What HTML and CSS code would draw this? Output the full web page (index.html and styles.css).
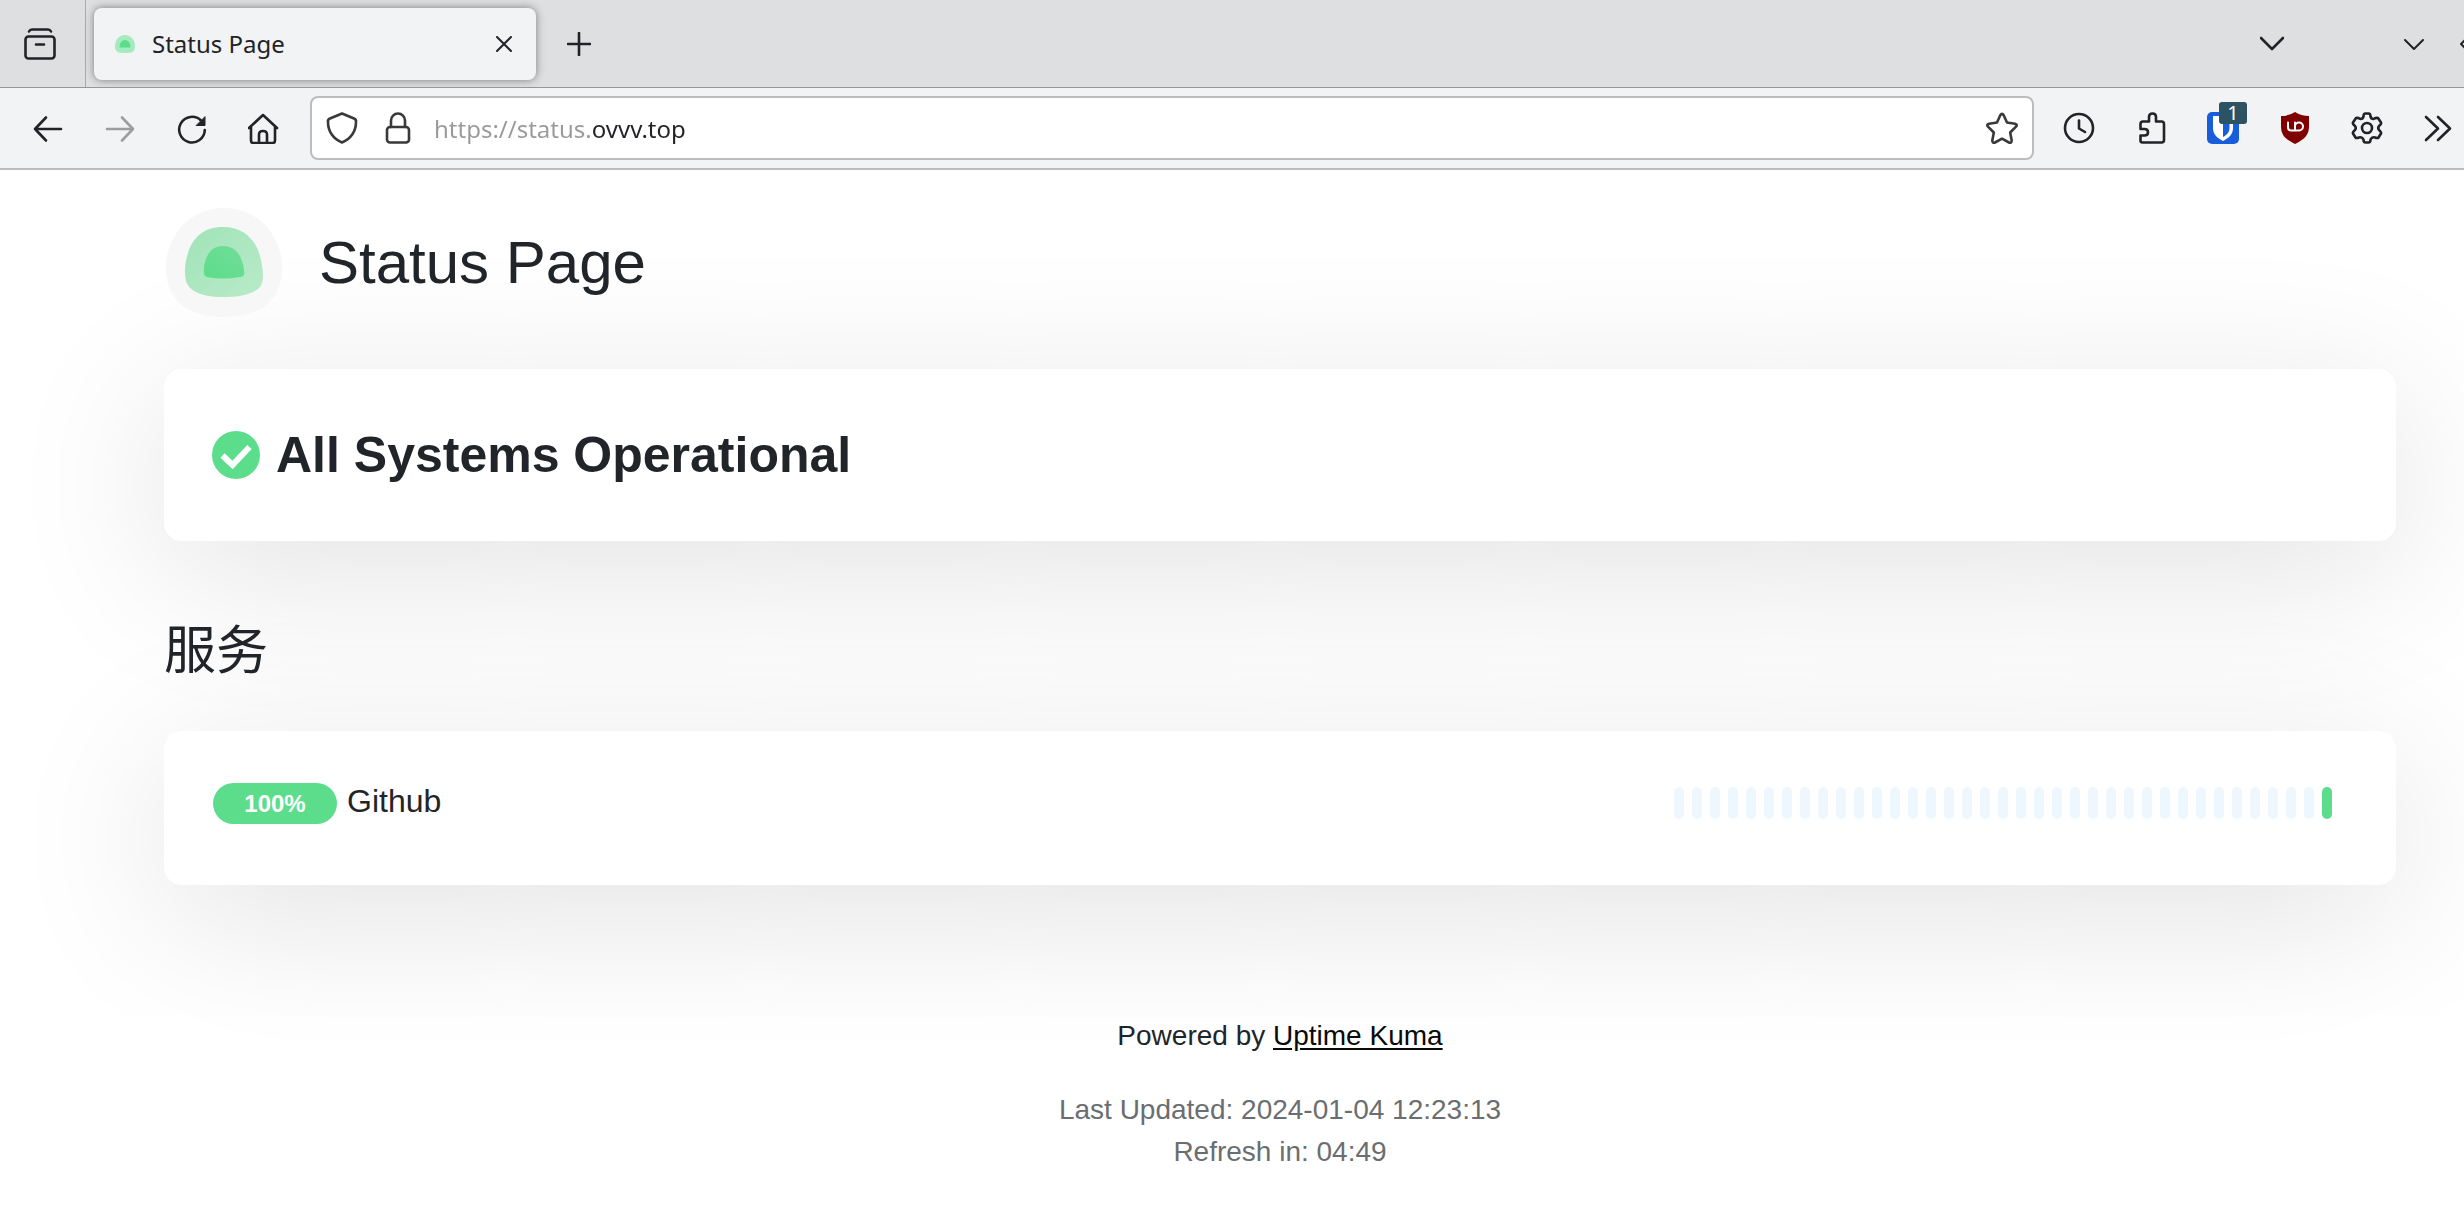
FILE: index.html
```html
<!DOCTYPE html>
<html lang="en">
<head>
<meta charset="utf-8">
<title>Status Page</title>
<link rel="stylesheet" href="styles.css">
</head>
<body>
<div class="browser">
  <div class="tabbar">
    <button class="recent" aria-label="Recent browsing">
      <svg class="icon" viewBox="0 0 32 32"><rect x="1.5" y="8.500" width="29" height="22" rx="3"/><path d="M5 3.500Q6 1.500 8 1.500H24Q26 1.500 27 3.500M12 16.500H20"/></svg>
    </button>
    <div class="tab">
      <svg class="favicon" viewBox="0 0 22 20"><path fill="#a6eac0" d="M11 1C17 1 21 6 21 12.500C21 18 18 19 11 19S1 18 1 12.500C1 6 5 1 11 1Z"/><path fill="#5cdd8b" d="M11 6C15 6 16.500 10 16.500 13.500H5.500C5.500 10 7 6 11 6Z"/></svg>
      <span class="tab-title">Status Page</span>
      <button class="tab-close" aria-label="Close tab"><svg class="icon-small" viewBox="0 0 16 16"><path d="M1 1L15 15M15 1L1 15"/></svg></button>
    </div>
    <button class="new-tab" aria-label="New tab"><svg class="icon-medium" viewBox="0 0 24 24"><path d="M12 1V23M1 12H23"/></svg></button>
    <div class="window-controls">
      <button class="list-tabs" aria-label="List all tabs"><svg class="icon-medium" viewBox="0 0 24 24"><path d="M1 6L12 17L23 6"/></svg></button>
      <button class="minimize" aria-label="Minimize"><svg class="icon-chevron" viewBox="0 0 20 20"><path d="M1 6L10 15L19 6"/></svg></button>
      <button class="maximize" aria-label="Maximize"><svg class="icon-chevron" viewBox="0 0 20 20"><path d="M1 10L10 1L19 10L10 19Z"/></svg></button>
    </div>
  </div>
  <div class="toolbar">
    <div class="tools">
      <button class="tool" aria-label="Back"><svg class="icon" viewBox="0 0 32 32"><path d="M29 17H3M14 5.500L3 17L14 28.500"/></svg></button>
      <button class="tool tool-off" aria-label="Forward" disabled><svg class="icon" viewBox="0 0 32 32"><path d="M3 17H29M18 5.500L29 17L18 28.500"/></svg></button>
      <button class="tool" aria-label="Reload"><svg class="icon" viewBox="0 0 32 32"><path d="M25 8.500A12.800 12.800 0 1 0 28.800 18"/><path class="solid" d="M29 5V13.500H20.500Z"/></svg></button>
      <button class="tool" aria-label="Home"><svg class="icon" viewBox="0 0 32 32"><path d="M1 16L15 3L29 16M3 15V28.500Q3 31 5.500 31H24.500Q27 31 27 28.500V15M11 31V22.500Q11 19 15 19T19 22.500V31"/></svg></button>
    </div>
    <div class="urlbar">
      <button class="url-icon" aria-label="Tracking protection"><svg class="icon" viewBox="0 0 32 32"><path d="M16 1.500L28 6.500Q30.500 7.500 30 10C30 19 25 27 16 30.500C7 27 2 19 2 10Q1.500 7.500 4 6.500Z"/></svg></button>
      <button class="url-icon" aria-label="Connection secure"><svg class="icon" viewBox="0 0 32 32"><rect x="5" y="15" width="22" height="15.500" rx="3"/><path d="M9 15V8.500A7 7 0 0 1 23 8.500V15"/></svg></button>
      <input class="address" type="text" aria-label="Address" value="https://status.ovvv.top">
      <button class="url-icon bookmark" aria-label="Bookmark"><svg class="icon" viewBox="0 0 32 32"><path d="M14.300 3.200Q16 .5 17.700 3.200L21 10.500L29 11.700Q31.800 12.500 30 14.700L24.200 20.500L25.700 28.500Q25.700 31.500 23 30.500L16 26.700L9 30.500Q6.300 31.500 6.300 28.500L7.800 20.500L2 14.700Q.2 12.500 3 11.700L11 10.500Z"/></svg></button>
    </div>
    <div class="tools">
      <button class="tool" aria-label="History"><svg class="icon" viewBox="0 0 32 32"><circle cx="16" cy="16" r="14"/><path d="M16 8.500V16.500L22 20"/></svg></button>
      <button class="tool" aria-label="Extensions"><svg class="icon" viewBox="0 0 32 32"><path d="M5.500 23.500V28.500Q5.500 30.500 7.500 30.500H26.500Q29 30.500 29 28V12Q29 9.500 26.500 9.500H21V5Q21 1.500 17.500 1.500T14 5V9.500H8Q5.500 9.500 5.500 12V17H9.500Q13 17 13 20.200T9.500 23.500Z"/></svg></button>
      <button class="tool" aria-label="Bitwarden">
        <svg class="icon" viewBox="0 0 32 32"><rect class="fill-blue" width="32" height="32" rx="5"/><path class="fill-white" d="M6 4H26V16C26 22 22 26 16 29C10 26 6 22 6 16Z"/><path class="fill-blue" d="M16 7H22.500V16C22.500 20 20 23 16 25Z"/></svg>
        <span class="badge">1</span>
      </button>
      <button class="tool" aria-label="uBlock Origin"><svg class="icon" viewBox="0 0 32 32"><path class="fill-red" d="M16 0Q22 4 30 4V14C30 23 26 27 16 32C6 27 2 23 2 14V4Q10 4 16 0Z"/><path class="mark" d="M9 10.500V15.500Q9 18.500 12 18.500H20A4 4 0 1 0 16 14.500V10.500M16 14.500V18.500"/></svg></button>
      <button class="tool" aria-label="Settings"><svg class="icon" viewBox="0 0 32 32"><circle cx="16" cy="16" r="5"/><path d="M12.500 4.500Q12.500 1.500 14.500 1.500H17.500Q19.500 1.500 19.500 4.500Q20 7 22.500 7Q25 5.500 27 6L30 10.500Q30.500 12 28.500 13.500Q26 16 28.500 18.500Q30.500 20 30 21.500L27.500 25.500Q26.500 26.500 24 25.500Q21 24.500 19.500 27.500Q19.500 30.500 17.500 30.500H14.500Q12.500 30.500 12.500 27.500Q11 24.500 8 25.500Q5.500 26.500 4.500 25.500L2 21.500Q1.500 20 3.500 18.500Q6 16 3.500 13.500Q1.500 12 2 10.500L5 6Q7 5.500 9.500 7Q12 7 12.500 4.500Z"/></svg></button>
      <button class="tool tool-last" aria-label="More tools"><svg class="icon" viewBox="0 0 32 32"><path d="M4 5L16 16.500L4 28M16 5L28 16.500L16 28"/></svg></button>
    </div>
  </div>
</div>

<main class="page">
  <header class="header">
    <svg class="logo" viewBox="0 0 116 112">
      <defs><linearGradient id="core" x1="1" y1="0" x2="0" y2="1"><stop offset="0" stop-color="#72dd98"/><stop offset="1" stop-color="#5cdd8b"/></linearGradient>
      <linearGradient id="body" x1="0" y1="0" x2="1" y2="1"><stop offset="0" stop-color="#9fe3b8"/><stop offset="1" stop-color="#b9ebc9"/></linearGradient></defs>
      <path fill="#f7f7f7" d="M58 1C92 1 116 29 116 60C116 92 96 110 58 110S0 92 0 60C0 29 24 1 58 1Z"/>
      <path fill="url(#body)" d="M57 20C79 20 90 34 94 49C97 61 98 70 96 76C94 85 78 90 56 90C38 90 23 85 20 74C18 66 19 55 22 46C27 30 38 20 57 20Z"/>
      <path fill="url(#core)" d="M57 39C67 39 73 45 76 54Q79 63 78 68Q77 70 74 70Q57 73 41 70Q38 69 38 66Q37 59 40 52C43 44 48 39 57 39Z"/>
    </svg>
    <h1 class="title">Status Page</h1>
  </header>

  <section class="card overall">
    <svg class="check" viewBox="0 0 48 48"><circle cx="24" cy="24" r="24"/><path d="M10.500 24.500L20.500 34L37.500 16"/></svg>
    <h2 class="overall-text">All Systems Operational</h2>
  </section>

  <section>
    <h2 class="group-title" lang="zh">服务</h2>
    <div class="card monitor">
      <span class="uptime">100%</span>
      <span class="monitor-name">Github</span>
      <div class="beats" role="img" aria-label="Heartbeat history">
        <i></i><i></i><i></i><i></i><i></i><i></i><i></i><i></i><i></i><i></i><i></i><i></i>
        <i></i><i></i><i></i><i></i><i></i><i></i><i></i><i></i><i></i><i></i><i></i><i></i>
        <i></i><i></i><i></i><i></i><i></i><i></i><i></i><i></i><i></i><i></i><i></i><i></i>
        <i class="up"></i>
      </div>
    </div>
  </section>

  <footer class="footer">
    <p class="powered">Powered by <a href="#">Uptime Kuma</a></p>
    <p class="refresh">Last Updated: 2024-01-04 12:23:13<br>Refresh in: 04:49</p>
  </footer>
</main>
</body>
</html>
```

FILE: styles.css
```css
* { box-sizing: border-box; }

body {
  margin: 0;
  background: #fff;
  color: #212529;
  font-family: "Liberation Sans", "Noto Sans CJK SC", sans-serif;
  font-size: 28px;
  line-height: 42px;
  overflow-x: hidden;
}

button {
  display: flex;
  align-items: center;
  justify-content: center;
  padding: 0;
  border: 0;
  background: none;
  color: inherit;
  font: inherit;
}

h1, h2, p { margin: 0; }

svg {
  display: block;
  flex: none;
  fill: none;
  stroke: currentColor;
  stroke-width: 2;
  stroke-linecap: round;
  stroke-linejoin: round;
}

.icon { width: 32px; height: 32px; stroke-width: 2.6; }
.icon-medium { width: 24px; height: 24px; stroke-width: 2.6; }
.icon-chevron { width: 20px; height: 20px; }
.icon-small { width: 16px; height: 16px; }

/* Browser chrome */
.browser {
  position: relative;
  z-index: 1;
  font-family: "Noto Sans", sans-serif;
  color: #222326;
}

.tabbar {
  display: flex;
  height: 88px;
  background: #dedfe1;
  border-bottom: 1px solid #96979a;
  overflow: hidden;
}

.recent { width: 86px; padding-right: 5px; border-right: 1px solid #a9aaad; }

.tab {
  display: flex;
  align-items: center;
  width: 442px;
  height: 72px;
  margin: 8px 0 0 8px;
  padding: 0 24px 0 20px;
  border-radius: 8px;
  background: #f1f3f5;
  box-shadow: 0 0 8px rgba(0, 0, 0, .45);
}

.favicon { width: 22px; height: 20px; stroke: none; }
.tab-title { flex: 1; margin-left: 16px; font-size: 24px; }
.new-tab { width: 86px; }

.window-controls { display: flex; align-items: center; margin-left: auto; }
.minimize { margin: 0 36px 0 120px; }
.maximize { width: 4px; justify-content: flex-start; overflow: hidden; }

.toolbar {
  display: flex;
  align-items: center;
  height: 82px;
  padding-left: 12px;
  background: #f1f3f5;
  border-bottom: 2px solid #bbbcbe;
}

.tools { display: flex; }
.tool { position: relative; width: 72px; height: 64px; }
.tool-off { color: #9c9d9f; }
.tool-last { width: 61px; padding-left: 9px; }

.solid { fill: currentColor; stroke-width: 1; }
.fill-blue { fill: #175ddc; stroke: none; }
.fill-white { fill: #fff; stroke: none; }
.fill-red { fill: #800000; stroke: none; }
.mark { stroke: #fff; stroke-width: 2; }

.badge {
  position: absolute;
  top: 6px;
  left: 32px;
  width: 28px;
  height: 22px;
  border-radius: 3px;
  background: #2c5263;
  color: #fff;
  font-size: 20px;
  line-height: 22px;
}

.urlbar {
  display: flex;
  flex: 1;
  align-items: center;
  height: 64px;
  margin: 0 9px 0 10px;
  padding: 0 2px;
  border: 2px solid #bbbcbe;
  border-radius: 8px;
  background: #fff;
  color: #38393b;
}

.url-icon { width: 56px; }

.address {
  flex: 1;
  min-width: 0;
  height: 56px;
  padding: 0;
  margin-left: 8px;
  border: 0;
  outline: 0;
  font: 24px "Noto Sans", sans-serif;
  background: linear-gradient(to right, #98999b 159px, #222326 159px);
  background-clip: text;
  -webkit-background-clip: text;
  -webkit-text-fill-color: transparent;
}

/* Status page */
.page { padding: 37px 68px 24px 164px; }

.header { display: flex; align-items: center; gap: 37px; margin-bottom: 50px; padding-left: 2px; }
.logo { width: 116px; height: 112px; stroke: none; }
.title { font-size: 60px; font-weight: 400; line-height: 72px; }

.card {
  border-radius: 18px;
  background: #fff;
  box-shadow: 0 30px 160px rgba(0, 0, 0, .12);
}

.overall { display: flex; align-items: center; gap: 16px; padding: 56px 48px; }
.overall-text { font-size: 50px; line-height: 60px; }
.check { width: 48px; height: 48px; }
.check circle { fill: #5cdd8b; stroke: none; }
.check path { stroke: #fff; stroke-width: 6; stroke-linecap: butt; stroke-linejoin: miter; }

.group-title { margin: 78px 0 48px; font-size: 52px; font-weight: 400; line-height: 64px; }

.monitor { display: flex; align-items: baseline; padding: 46px 64px 60px 49px; }

.uptime {
  width: 124px;
  border-radius: 21px;
  background: #5cdd8b;
  color: #fff;
  font-size: 24px;
  font-weight: 700;
  line-height: 41px;
  text-align: center;
}

.monitor-name { margin-left: 10px; font-size: 32px; line-height: 48px; }

.beats { display: flex; align-self: center; gap: 8px; margin-left: auto; padding-top: 4px; }
.beats i { width: 10px; height: 32px; border-radius: 5px; background: #eff7fe; }
.beats .up { background: #5cdd8b; }

.footer { margin-top: 130px; text-align: center; }
.powered { margin-bottom: 32px; }
.powered a { color: #0a0a0a; text-underline-offset: 3px; }
.refresh { color: #6b6e70; }
```
